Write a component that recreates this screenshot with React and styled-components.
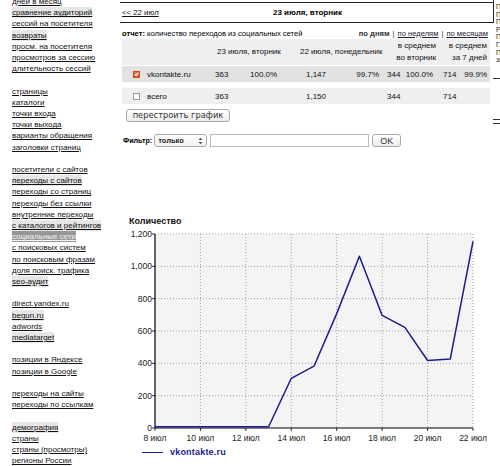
import React from 'react';
import styled, { createGlobalStyle } from 'styled-components';

const Global = createGlobalStyle`
  html, body { margin: 0; padding: 0; background: #fff; }
  body {
    font-family: "Liberation Sans", Arial, sans-serif;
    color: #000;
    width: 500px;
    height: 466px;
    overflow: hidden;
  }
`;

const Page = styled.div`
  display: flex;
  width: 500px;
  height: 466px;
  overflow: hidden;
`;

const Sidebar = styled.nav`
  flex: none;
  width: 120px;
  box-sizing: border-box;
  padding-left: 12px;
  margin-top: -4px;
  font-size: 8px;
  line-height: 11.2px;
`;

const NavLink = styled.a`
  display: block;
  width: fit-content;
  white-space: nowrap;
  text-decoration: underline;
  color: ${p => (p.$active ? '#f4f4f4' : '#111')};
  background: ${p => (p.$active ? '#979797' : p.$shade ? '#e6e6e6' : 'transparent')};
`;

const NavGap = styled.div`
  height: 11.2px;
`;

const Main = styled.main`
  flex: none;
  width: 373px;
  display: flex;
  flex-direction: column;
  font-size: 7.8px;
`;

const Header = styled.div`
  margin-top: 2px;
  height: 19px;
  border-top: 1px solid #222;
  border-bottom: 1px solid #222;
  display: grid;
  grid-template-columns: 1fr auto 1fr;
  align-items: center;
  padding-left: 2px;
`;

const BackLink = styled.a`
  color: #111;
  text-decoration: underline;
`;

const Title = styled.b`
  font-size: 8px;
`;

const ReportRow = styled.div`
  margin-top: 5px;
  height: 10px;
  display: flex;
  align-items: center;
  justify-content: space-between;
  padding: 0 5px 0 2px;
  font-size: 7.6px;
`;

const Periods = styled.div`
  display: flex;
  gap: 3px;
  align-items: center;
  color: #333;
`;

const PeriodLink = styled.a`
  color: #223;
  text-decoration: underline;
`;

const Table = styled.div`
  margin: 1px 0 0 2px;
  width: 368px;
  display: flex;
  flex-direction: column;
`;

const Row = styled.div`
  display: grid;
  grid-template-columns: 23px 67px 38px 47px 48px 37px 23px 31px 24px 30px;
  align-items: center;
  height: ${p => p.$h}px;
  margin-top: ${p => p.$mt || 0}px;
  background: ${p => p.$bg};
  font-size: 8px;
`;

const HeadCell = styled.div`
  grid-column: span ${p => p.$span || 1};
  text-align: ${p => p.$align || 'left'};
  padding: ${p => p.$pad || '0'};
  line-height: 12px;
  color: #111;
  white-space: nowrap;
`;

const Cell = styled.div`
  text-align: ${p => p.$align || 'left'};
  padding: ${p => p.$pad || '0'};
  white-space: nowrap;
  color: #111;
`;

const Check = styled.span`
  display: block;
  margin-left: 11px;
  width: 7px;
  height: 7px;
  box-sizing: border-box;
  border: 1px solid ${p => (p.$on ? '#c84a1e' : '#999')};
  background: ${p => (p.$on ? 'linear-gradient(#f07a44, #d9552a)' : '#fff')};
  position: relative;
`;

const Tick = styled.svg`
  position: absolute;
  left: 0;
  top: 0;
`;

const RebuildButton = styled.button`
  margin: 5px 0 0 6px;
  width: 104px;
  height: 13px;
  padding: 0;
  box-sizing: border-box;
  border: 1px solid #aaa;
  border-radius: 3px;
  background: linear-gradient(#ffffff, #ececec);
  font-family: "DejaVu Sans", Verdana, sans-serif;
  font-size: 8.3px;
  line-height: 11px;
  color: #333;
`;

const FilterRow = styled.div`
  margin: 12px 0 0 3px;
  height: 13px;
  display: flex;
  align-items: center;
`;

const FilterLabel = styled.b`
  font-size: 7.2px;
  white-space: nowrap;
  margin-right: 2px;
`;

const SelectBox = styled.div`
  width: 53px;
  height: 13px;
  box-sizing: border-box;
  border: 1px solid #aaa;
  border-radius: 3px;
  background: linear-gradient(#fff, #f2f2f2);
  display: flex;
  align-items: center;
  justify-content: space-between;
  padding: 0 3px 0 3px;
  font-size: 7.5px;
  font-weight: bold;
  color: #222;
  overflow: hidden;
`;

const SelectText = styled.span`
  width: 32px;
  overflow: hidden;
  white-space: nowrap;
`;

const TextInput = styled.div`
  margin-left: 3px;
  width: 159px;
  height: 13px;
  box-sizing: border-box;
  border: 1px solid #bbb;
  background: #fff;
`;

const OkButton = styled.div`
  margin-left: 3px;
  width: 29px;
  height: 13px;
  box-sizing: border-box;
  border: 1px solid #aaa;
  border-radius: 3px;
  background: linear-gradient(#fff, #ececec);
  display: flex;
  align-items: center;
  justify-content: center;
  font-size: 9px;
  color: #333;
`;

const ChartTitle = styled.b`
  display: block;
  margin: 68px 0 0 9px;
  font-size: 9px;
  line-height: 12px;
  color: #111;
`;

const ChartSvg = styled.svg`
  display: block;
  margin-top: 1px;
  font-family: "Liberation Sans", Arial, sans-serif;
`;

const Legend = styled.div`
  margin: 3px 0 0 22px;
  height: 12px;
  display: flex;
  align-items: center;
`;

const LegendLine = styled.span`
  width: 21px;
  border-top: 1.5px solid #1b1b8f;
`;

const LegendText = styled.b`
  margin-left: 7px;
  font-size: 9px;
  letter-spacing: 0.2px;
  color: #1b1b8f;
`;

const RightStrip = styled.aside`
  flex: none;
  width: 7px;
  overflow: hidden;
  position: relative;
  display: flex;
  flex-direction: column;
  padding-top: 3px;
  &::before {
    content: '';
    position: absolute;
    left: 0;
    top: 0;
    height: 23px;
    border-left: 1px solid #222;
  }
`;

const StripText = styled.div`
  padding-left: 3px;
  font-size: 7px;
  line-height: 7.6px;
  white-space: nowrap;
  color: #222;
`;

const StripDash = styled.div`
  margin-top: ${p => p.$mt}px;
  height: ${p => p.$h}px;
  border-top: 1px solid #333;
  border-bottom: ${p => (p.$double ? '1px solid #333' : 'none')};
`;

const navGroups = [
  [
    ['дней в месяц'], ['сравнение аудиторий', 'shade'], ['сессий на посетителя'], ['возвраты', 'shade'],
    ['просм. на посетителя'], ['просмотров за сессию'], ['длительность сессий'],
  ],
  [
    ['страницы'], ['каталоги'], ['точки входа'], ['точки выхода'], ['варианты обращения'], ['заголовки страниц'],
  ],
  [
    ['посетители с сайтов'], ['переходы с сайтов', 'shade'], ['переходы со страниц'], ['переходы без ссылки'],
    ['внутренние переходы'], ['с каталогов и рейтингов', 'shade'], ['социальные сети', 'active'],
    ['с поисковых систем'], ['по поисковым фразам'], ['доля поиск. трафика'], ['seo-аудит', 'shade'],
  ],
  [['direct.yandex.ru'], ['begun.ru', 'shade'], ['adwords'], ['mediatarget', 'shade']],
  [['позиции в Яндексе'], ['позиции в Google']],
  [['переходы на сайты'], ['переходы по ссылкам']],
  [['демография', 'shade'], ['страны'], ['страны (просмотры)'], ['регионы России']],
];

const data = [0, 0, 0, 0, 0, 0, 300, 375, 700, 1055, 690, 615, 410, 420, 1147];
const X0 = 35, X1 = 353, Y0 = 6, Y1 = 200;
const step = (X1 - X0) / 14;
const px = i => X0 + i * step;
const py = v => Y1 - (v / 1200) * (Y1 - Y0);

function Chart() {
  const yTicks = [0, 200, 400, 600, 800, 1000, 1200];
  const xTicks = [0, 2, 4, 6, 8, 10, 12, 14];
  const points = data.map((v, i) => `${px(i).toFixed(1)},${(py(v) - 1.2).toFixed(1)}`).join(' ');
  return (
    <ChartSvg width="373" height="215" viewBox="0 0 373 215">
      <rect x={X0} y={Y0} width={X1 - X0} height={Y1 - Y0} fill="#f4f4f4" />
      {yTicks.filter(v => v > 0).map(v => (
        <line key={'h' + v} x1={X0} x2={X1} y1={py(v)} y2={py(v)} stroke="#8a8a8a" strokeWidth="0.8" strokeDasharray="1 2" />
      ))}
      {xTicks.filter(i => i > 0).map(i => (
        <line key={'v' + i} x1={px(i)} x2={px(i)} y1={Y0} y2={Y1} stroke="#8a8a8a" strokeWidth="0.8" strokeDasharray="1 2" />
      ))}
      <line x1={X0} x2={X0} y1={Y0} y2={Y1} stroke="#000" strokeWidth="1.2" />
      <line x1={X0} x2={X1} y1={Y1} y2={Y1} stroke="#000" strokeWidth="1.2" />
      {yTicks.map(v => (
        <g key={'yl' + v}>
          <line x1={32} x2={X0} y1={py(v)} y2={py(v)} stroke="#000" strokeWidth="0.8" />
          <text x={32} y={py(v) + 3} textAnchor="end" fontSize="8.5" fill="#222">
            {v.toLocaleString('en-US')}
          </text>
        </g>
      ))}
      {xTicks.map(i => (
        <g key={'xl' + i}>
          <line x1={px(i)} x2={px(i)} y1={Y1} y2={Y1 + 3} stroke="#000" strokeWidth="0.8" />
          <text x={px(i)} y={213} textAnchor="middle" fontSize="8.5" fill="#222">
            {8 + i} июл
          </text>
        </g>
      ))}
      <polyline points={points} fill="none" stroke="#1b1b8f" strokeWidth="1.5" strokeLinejoin="round" />
    </ChartSvg>
  );
}

export default function App() {
  return (
    <>
      <Global />
      <Page>
        <Sidebar>
          {navGroups.map((group, gi) => (
            <React.Fragment key={gi}>
              {gi > 0 && <NavGap />}
              {group.map(([label, kind]) => (
                <NavLink key={label} href="#" $shade={kind === 'shade'} $active={kind === 'active'}>
                  {label}
                </NavLink>
              ))}
            </React.Fragment>
          ))}
        </Sidebar>

        <Main>
          <Header>
            <span><BackLink href="#">&lt;&lt; 22 июл</BackLink></span>
            <Title>23 июля, вторник</Title>
            <span />
          </Header>

          <ReportRow>
            <span><b>отчет:</b> количество переходов из социальных сетей</span>
            <Periods>
              <b>по дням</b>
              <span>|</span>
              <PeriodLink href="#">по неделям</PeriodLink>
              <span>|</span>
              <PeriodLink href="#">по месяцам</PeriodLink>
            </Periods>
          </ReportRow>

          <Table>
            <Row $h={26} $bg="#efefef">
              <HeadCell $span={2} />
              <HeadCell $span={2} $pad="0 0 0 5px">23 июля, вторник</HeadCell>
              <HeadCell $span={2} $pad="0 0 0 3px">22 июля, понедельник</HeadCell>
              <HeadCell $span={2} $align="right">в среднем<br />во вторник</HeadCell>
              <HeadCell $span={2} $align="right" $pad="0 3px 0 0">в среднем<br />за 7 дней</HeadCell>
            </Row>
            <Row $h={16} $mt={1} $bg="#e2e2e2">
              <Cell>
                <Check $on>
                  <Tick width="5" height="5" viewBox="0 0 5 5">
                    <path d="M0.8 2.4 L2 3.7 L4.3 0.9" fill="none" stroke="#fff" strokeWidth="1.1" />
                  </Tick>
                </Check>
              </Cell>
              <Cell $pad="0 0 0 2px">vkontakte.ru</Cell>
              <Cell $pad="0 0 0 3px">363</Cell>
              <Cell $align="right" $pad="0 20px 0 0">100.0%</Cell>
              <Cell $pad="0 0 0 9px">1,147</Cell>
              <Cell $align="right" $pad="0 3px 0 0">99.7%</Cell>
              <Cell $pad="0 0 0 5px">344</Cell>
              <Cell $align="right" $pad="0 3px 0 0">100.0%</Cell>
              <Cell $pad="0 0 0 7px">714</Cell>
              <Cell $align="right" $pad="0 3px 0 0">99.9%</Cell>
            </Row>
            <Row $h={16} $mt={6} $bg="#efefef">
              <Cell><Check /></Cell>
              <Cell $pad="0 0 0 2px">всего</Cell>
              <Cell $pad="0 0 0 3px">363</Cell>
              <Cell />
              <Cell $pad="0 0 0 9px">1,150</Cell>
              <Cell />
              <Cell $pad="0 0 0 5px">344</Cell>
              <Cell />
              <Cell $pad="0 0 0 7px">714</Cell>
              <Cell />
            </Row>
          </Table>

          <RebuildButton type="button">перестроить график</RebuildButton>

          <FilterRow>
            <FilterLabel>Фильтр:</FilterLabel>
            <SelectBox>
              <SelectText>только</SelectText>
              <svg width="5" height="8" viewBox="0 0 5 8">
                <path d="M0.5 3 L2.5 0.8 L4.5 3 Z M0.5 5 L2.5 7.2 L4.5 5 Z" fill="#555" />
              </svg>
            </SelectBox>
            <TextInput />
            <OkButton>OK</OkButton>
          </FilterRow>

          <ChartTitle>Количество</ChartTitle>
          <Chart />
          <Legend>
            <LegendLine />
            <LegendText>vkontakte.ru</LegendText>
          </Legend>
        </Main>

        <RightStrip>
          <StripText>
            Посетители<br />Просмотры<br />Посетители<br />Рейтинг<br />Посещаемость<br />Глубина<br />Посещения<br />звонки
          </StripText>
          <StripDash $mt={14} $h={0} />
          <StripDash $mt={40} $h={3} $double />
        </RightStrip>
      </Page>
    </>
  );
}
